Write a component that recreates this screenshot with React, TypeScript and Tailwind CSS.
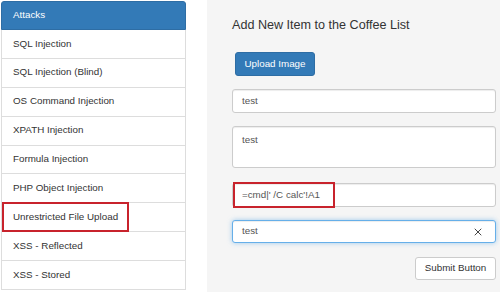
import { X } from 'lucide-react';

const attacks = [
  'SQL Injection',
  'SQL Injection (Blind)',
  'OS Command Injection',
  'XPATH Injection',
  'Formula Injection',
  'PHP Object Injection',
  'Unrestricted File Upload',
  'XSS - Reflected',
  'XSS - Stored',
];

export default function App() {
  return (
    <div className="flex w-[500px] h-[292px] overflow-hidden bg-white font-['Liberation_Sans',Arial,sans-serif] text-[9.8px] text-[#333]">
      {/* Sidebar list */}
      <div className="w-[186px] pl-[1px] pt-[1px] flex-shrink-0">
        <div className="flex flex-col">
          <div className="h-[29px] flex items-center px-[11px] bg-[#337ab7] border border-[#2e6da4] rounded-t-[3px] text-white">
            Attacks
          </div>
          {attacks.map((item) => (
            <div
              key={item}
              className="relative h-[28.9px] flex-shrink-0 flex items-center px-[11px] bg-white border border-t-0 border-[#ddd]"
            >
              {item}
              {item === 'Unrestricted File Upload' && (
                <div className="absolute left-[0px] top-[-1px] w-[127px] h-[30px] border-2 border-[#c8232c]" />
              )}
            </div>
          ))}
        </div>
      </div>

      {/* Form panel */}
      <div className="ml-[21px] flex-1 bg-[#f5f5f5] pl-[25px] pr-[4px] flex flex-col">
        <h4 className="pt-[18px] text-[12.6px] leading-[14px] text-[#333]">Add New Item to the Coffee List</h4>

        <button className="mt-[20px] ml-[3px] self-start h-[24px] w-[80px] rounded-[3px] bg-[#337ab7] border border-[#2e6da4] text-white">
          Upload Image
        </button>

        <div className="mt-[13px] h-[24px] flex items-center px-[9px] bg-white border border-[#ccc] rounded-[3px] shadow-[inset_0_1px_1px_rgba(0,0,0,0.075)] text-[#555]">
          test
        </div>

        <div className="mt-[13px] h-[42px] pt-[6px] px-[9px] bg-white border border-[#ccc] rounded-[3px] shadow-[inset_0_1px_1px_rgba(0,0,0,0.075)] text-[#555]">
          test
        </div>

        <div className="relative mt-[15px] h-[24px] flex items-center px-[9px] bg-white border border-[#ccc] rounded-[3px] shadow-[inset_0_1px_1px_rgba(0,0,0,0.075)] text-[#555]">
          =cmd|' /C calc'!A1
          <div className="absolute left-[0px] top-[-2px] w-[102px] h-[26px] border-2 border-[#c8232c]" />
        </div>

        <div className="mt-[13px] h-[23px] flex items-center justify-between pl-[9px] pr-[11px] bg-white border border-[#66afe9] rounded-[3px] shadow-[inset_0_1px_1px_rgba(0,0,0,0.075),0_0_5px_rgba(102,175,233,0.6)] text-[#555]">
          <span>test</span>
          <X size={12} strokeWidth={2} className="text-[#444]" />
        </div>

        <button className="mt-[14px] self-end h-[23px] w-[81px] rounded-[3px] bg-white border border-[#ccc] text-[#333]">
          Submit Button
        </button>
      </div>
    </div>
  );
}
